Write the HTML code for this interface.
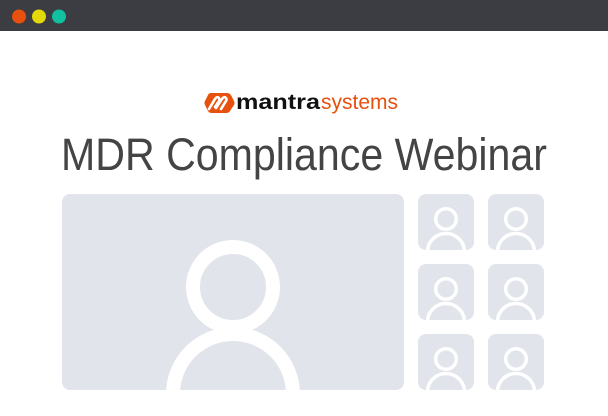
<!DOCTYPE html>
<html><head><meta charset="utf-8"><style>
html,body{margin:0;padding:0;width:608px;height:416px;background:#fff;overflow:hidden;font-family:"Liberation Sans",sans-serif}
svg{display:block}
</style></head><body>
<svg width="608" height="416" viewBox="0 0 608 416" xmlns="http://www.w3.org/2000/svg">
<defs>
<clipPath id="big"><rect x="62" y="194" width="342" height="196" rx="8"/></clipPath>
<clipPath id="t"><rect x="0" y="0" width="56" height="56" rx="8"/></clipPath>
<g id="tile">
<rect x="0" y="0" width="56" height="56" rx="8" fill="#e1e4eb"/>
<g clip-path="url(#t)" fill="none" stroke="#fff" stroke-width="3.5">
<circle cx="28" cy="25" r="10.3"/>
<circle cx="28" cy="58" r="18.5"/>
</g>
</g>
</defs>
<rect x="0" y="0" width="608" height="31" fill="#3c3d42"/>
<circle cx="19" cy="16.5" r="7" fill="#e8500d"/>
<circle cx="39" cy="16.5" r="7" fill="#e4d80a"/>
<circle cx="59" cy="16.5" r="7" fill="#10c09e"/>

<path d="M211 93 L227 93 Q230 93 231.5 96 L234 101 Q235 103 234 105 L230 111 Q229 113 226 113 L212 113 Q209 113 208 111 L205 105 Q204 103 205 101 L208 95 Q209 93 211 93 Z" fill="#e8500d"/>
<path d="M209 109 L215 99 Q217 96 219 98 Q220 99 219 101 L215 107 M216 108 L222 99 Q224 96 226 98 Q227 99 226 101 L221 109" fill="none" stroke="#fff" stroke-width="2.6" stroke-linecap="round"/>
<text x="236" y="109" font-size="21" font-weight="bold" fill="#111" textLength="84" lengthAdjust="spacingAndGlyphs">mantra</text>
<text x="321" y="109" font-size="21" fill="#e8500d" textLength="77" lengthAdjust="spacingAndGlyphs">systems</text>

<text x="61" y="170" font-size="45" fill="#444" textLength="486" lengthAdjust="spacingAndGlyphs">MDR Compliance Webinar</text>

<rect x="62" y="194" width="342" height="196" rx="8" fill="#e1e4eb"/>
<g clip-path="url(#big)" fill="none" stroke="#fff" stroke-width="14">
<circle cx="233" cy="287" r="40"/>
<circle cx="233" cy="394" r="60"/>
</g>

<use href="#tile" x="418" y="194"/>
<use href="#tile" x="488" y="194"/>
<use href="#tile" x="418" y="264"/>
<use href="#tile" x="488" y="264"/>
<use href="#tile" x="418" y="334"/>
<use href="#tile" x="488" y="334"/>
</svg>
</body></html>
